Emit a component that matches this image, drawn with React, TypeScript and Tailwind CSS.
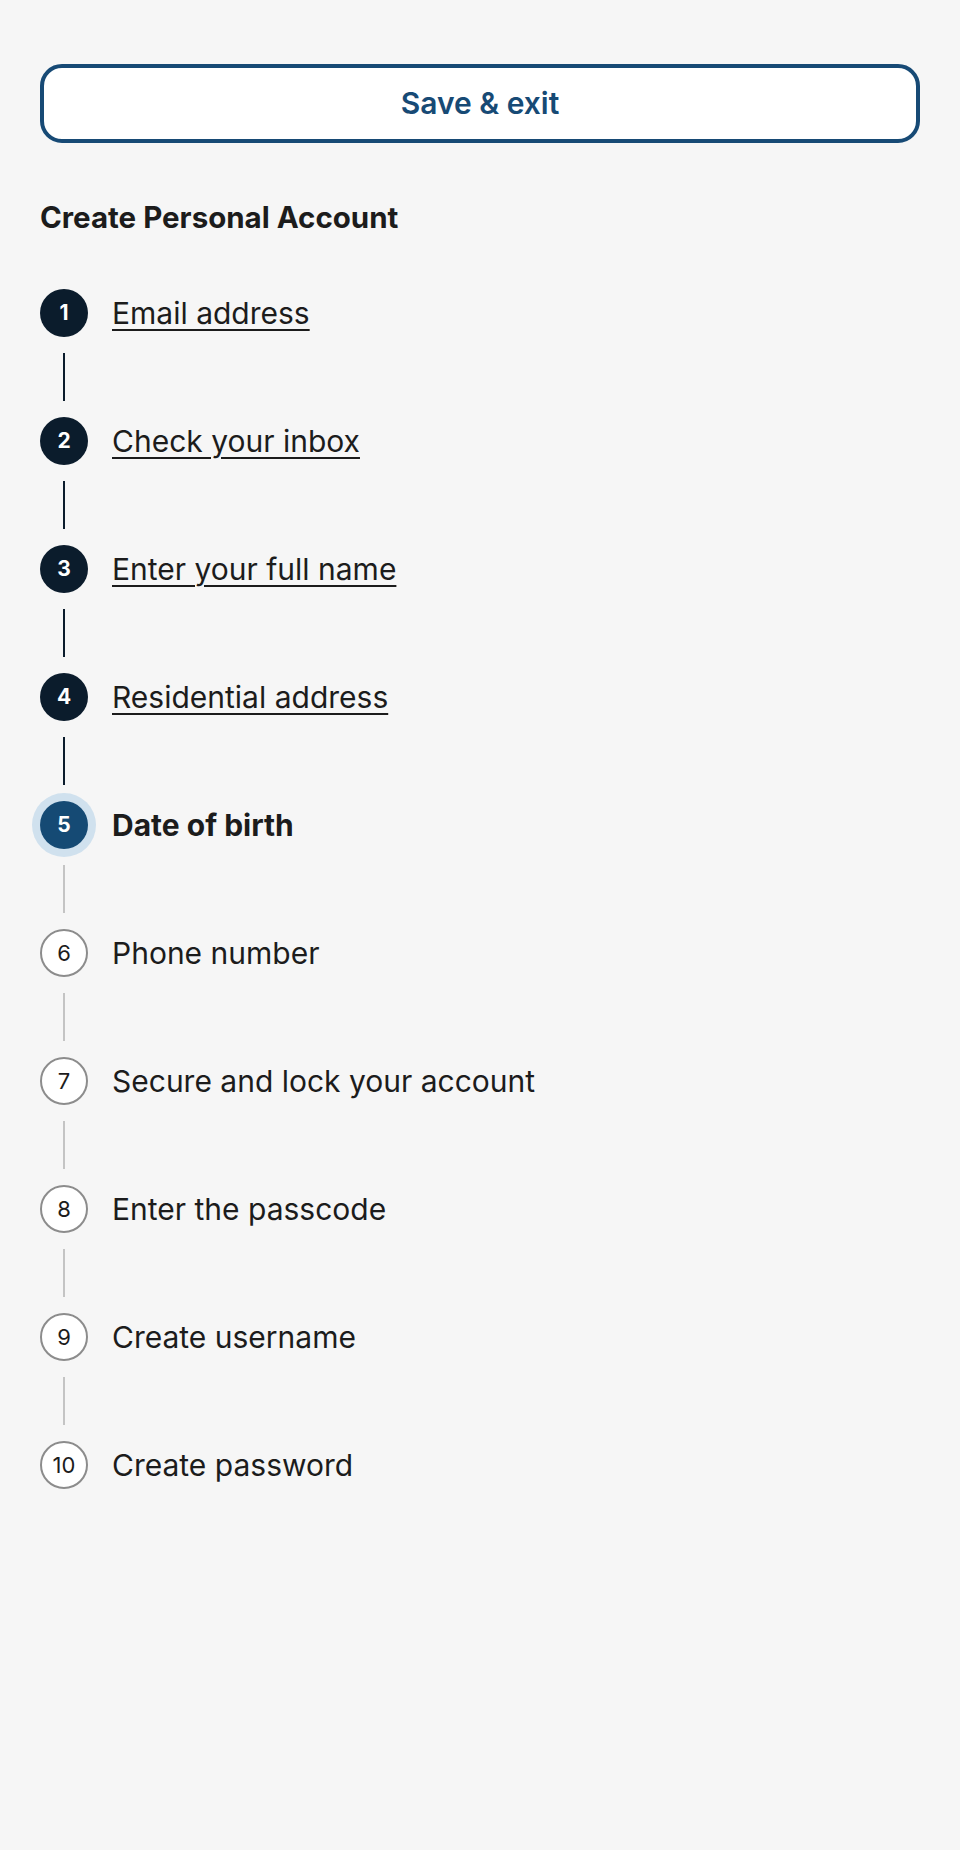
import React from "react";

type Step = { n: number; label: string; status: "done" | "current" | "todo" };

const steps: Step[] = [
  { n: 1, label: "Email address", status: "done" },
  { n: 2, label: "Check your inbox", status: "done" },
  { n: 3, label: "Enter your full name", status: "done" },
  { n: 4, label: "Residential address", status: "done" },
  { n: 5, label: "Date of birth", status: "current" },
  { n: 6, label: "Phone number", status: "todo" },
  { n: 7, label: "Secure and lock your account", status: "todo" },
  { n: 8, label: "Enter the passcode", status: "todo" },
  { n: 9, label: "Create username", status: "todo" },
  { n: 10, label: "Create password", status: "todo" },
];

const StepCircle = ({ step }: { step: Step }) => {
  if (step.status === "done") {
    return (
      <div className="w-12 h-12 shrink-0 rounded-full bg-[#0b1c2c] text-white flex items-center justify-center text-[21px] font-bold">
        {step.n}
      </div>
    );
  }
  if (step.status === "current") {
    return (
      <div className="w-12 h-12 shrink-0 rounded-full bg-[#154a74] text-white flex items-center justify-center text-[21px] font-bold ring-8 ring-[#d0e1ee]">
        {step.n}
      </div>
    );
  }
  return (
    <div className="w-12 h-12 shrink-0 rounded-full bg-white border-2 border-[#8c8c8c] text-[#1c1c1c] flex items-center justify-center text-[22px]">
      {step.n}
    </div>
  );
};

export default function App() {
  return (
    <div
      className="min-h-[1850px] w-full bg-[#f6f6f6] px-10 pt-16 text-[#1c1c1c]"
      style={{ fontFamily: "Inter, 'Liberation Sans', sans-serif" }}
    >
      <button className="w-full h-[79px] rounded-[22px] border-4 border-[#174a75] bg-white text-[#174a75] text-[30px] font-semibold">
        Save &amp; exit
      </button>

      <h1 className="mt-[58px] text-[29.5px] font-bold leading-8">Create Personal Account</h1>

      <ol className="mt-[56px] flex flex-col">
        {steps.map((step, i) => (
          <li key={step.n} className="flex flex-col">
            <div className="flex items-center gap-6 h-12">
              <StepCircle step={step} />
              {step.status === "done" ? (
                <a
                  href="#"
                  className="text-[30px] underline decoration-2 underline-offset-[5px] text-[#1c1c1c]"
                >
                  {step.label}
                </a>
              ) : (
                <span
                  className={
                    step.status === "current"
                      ? "text-[30px] font-bold"
                      : "text-[30px]"
                  }
                >
                  {step.label}
                </span>
              )}
            </div>
            {i < steps.length - 1 && (
              <div className="w-12 flex justify-center py-4">
                <div
                  className={
                    step.status === "done"
                      ? "w-[2px] h-12 bg-[#0b1c2c]"
                      : "w-[2px] h-12 bg-[#c4c4c4]"
                  }
                />
              </div>
            )}
          </li>
        ))}
      </ol>
    </div>
  );
}
